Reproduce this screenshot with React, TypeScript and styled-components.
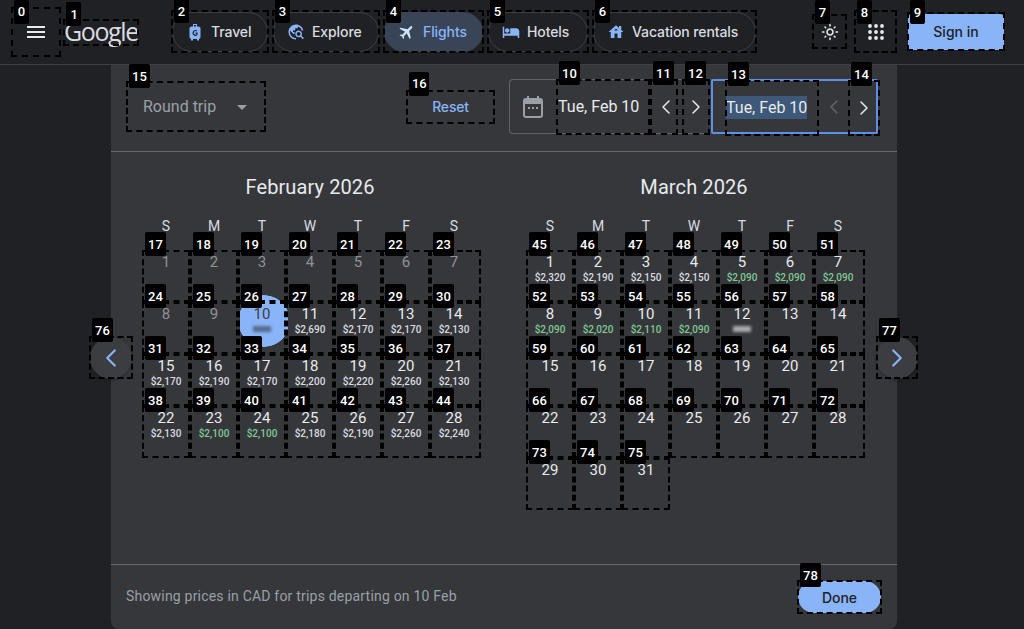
import { ChevronLeft, ChevronRight } from 'lucide-react'
import type { ReactNode } from 'react'
import { MdArrowDropDown, MdFlight, MdHotel, MdHouse, MdMenu, MdOutlineLightMode, MdTravelExplore } from 'react-icons/md'
import styled, { createGlobalStyle } from 'styled-components'

const Global = createGlobalStyle`
  html, body {
    margin: 0;
    height: 100%;
    background: #202124;
    overflow: hidden;
  }
  * { box-sizing: border-box; }
  body {
    font-family: Roboto, "Liberation Sans", sans-serif;
    color: #e8eaed;
  }
`

const Page = styled.div`
  width: 1024px;
  height: 629px;
  display: flex;
  flex-direction: column;
  overflow: hidden;
`

const Boxed = styled.div<{ $w?: number; $h?: number }>`
  position: relative;
  flex: none;
  display: flex;
  align-items: center;
  ${(p) => (p.$w ? `width: ${p.$w}px;` : '')}
  ${(p) => (p.$h ? `height: ${p.$h}px;` : '')}
  &::after {
    content: '';
    position: absolute;
    inset: 0;
    border: 2px dashed #000;
    pointer-events: none;
    z-index: 4;
  }
`

const Badge = styled.span<{ $top: number }>`
  position: absolute;
  left: 3px;
  top: ${(p) => p.$top}px;
  height: 24px;
  min-width: 15px;
  padding: 0 3px;
  display: flex;
  align-items: center;
  justify-content: center;
  background: #000;
  border-radius: 2px;
  color: #fff;
  font: 500 13px Roboto, sans-serif;
  z-index: 5;
`

const Tagged = ({ n, w, h, top = -18, children, className }: { n: number; w?: number; h?: number; top?: number; children?: ReactNode; className?: string }) => (
  <Boxed $w={w} $h={h} className={className}>
    {children}
    <Badge $top={top}>{n}</Badge>
  </Boxed>
)

const Header = styled.div`
  height: 65px;
  flex: none;
  display: flex;
  align-items: center;
  padding: 0 19px 1px 11px;
  background: #202124;
  border-bottom: 1px solid #3c4043;
`

const MenuBtn = styled(Tagged)`
  justify-content: center;
  color: #e8eaed;
  font-size: 24px;
`

const Logo = styled(Tagged)`
  margin: 2px 0 0 2px;
  padding: 0 0 3px 1px;
  font: 400 25px "Open Sans", sans-serif;
  letter-spacing: -1.4px;
  color: #dadce0;
`

const Nav = styled.div`
  display: flex;
  gap: 3px;
  margin-left: 32px;
`

const Chip = styled.div<{ $active?: boolean }>`
  flex: 1;
  height: 40px;
  margin: 0 1px;
  display: flex;
  align-items: center;
  gap: 7px;
  padding-left: 13px;
  border-radius: 20px;
  border: 1px solid ${(p) => (p.$active ? '#394457' : '#3c4043')};
  background: ${(p) => (p.$active ? '#394457' : 'transparent')};
  color: ${(p) => (p.$active ? '#8ab4f8' : '#dadce0')};
  font: 500 14px Inter, sans-serif;
  letter-spacing: -0.1px;
  svg {
    flex: none;
    font-size: 18px;
    color: #8ab4f8;
  }
`

const PlaneIcon = styled(MdFlight)`
  transform: rotate(45deg);
  && {
    color: #d2e3fc;
  }
`

const Right = styled.div`
  margin-left: auto;
  display: flex;
  align-items: center;
  gap: 7px;
`

const IconBox = styled(Tagged)`
  justify-content: center;
  color: #e8eaed;
  font-size: 18px;
`

const SignInBox = styled(Tagged)`
  margin-left: 3px;
`

const SignIn = styled.div`
  flex: 1;
  height: 36px;
  margin: 0 1px;
  display: flex;
  align-items: center;
  justify-content: center;
  background: #8ab4f8;
  border-radius: 4px;
  color: #202124;
  font: 500 14px Inter, sans-serif;
`

const Panel = styled.div`
  position: relative;
  flex: 1;
  width: 786px;
  margin-left: 111px;
  display: flex;
  flex-direction: column;
  background: #36373b;
  border-radius: 0 0 8px 8px;
`

const Toolbar = styled.div`
  height: 87px;
  flex: none;
  display: flex;
  align-items: center;
  padding: 0 0 3px 15px;
  border-bottom: 1px solid #66686c;
`

const TripSelect = styled(Tagged)`
  padding-left: 17px;
  color: #9aa0a6;
  font-size: 16px;
  svg {
    margin-left: 14px;
    font-size: 24px;
  }
`

const Reset = styled(Tagged)`
  margin-left: 140px;
  justify-content: center;
  color: #8ab4f8;
  font: 500 14px Inter, sans-serif;
  letter-spacing: -0.2px;
`

const DateField = styled.div`
  flex: none;
  height: 55px;
  display: flex;
  align-items: stretch;
  border: 1px solid #5f6368;
`

const StartField = styled(DateField)`
  width: 202px;
  margin-left: 14px;
  border-right: 0;
  border-radius: 4px 0 0 4px;
`

const EndField = styled(DateField)`
  width: 167px;
  border: 2px solid #5b8fe8;
  border-radius: 2px;
`

const CalIcon = styled.div`
  width: 46px;
  flex: none;
  display: flex;
  align-items: center;
  justify-content: center;
  color: #9aa0a6;
`

const DateText = styled(Tagged)`
  height: 56px;
  margin: -1px 0;
  padding: 0 0 2px 2px;
  font-size: 16px;
  color: #e8eaed;
`

const EndDateText = styled(DateText)`
  margin-left: 12px;
  padding-left: 1px;
`

const Picked = styled.span`
  background: #3d5878;
  padding: 2px 0;
`

const Stepper = styled(Tagged)`
  height: 56px;
  margin: -1px 0;
  justify-content: center;
  color: #e8eaed;
`

const PrevStepper = styled(Stepper)`
  padding-left: 3px;
`

const NextStepper = styled(Stepper)`
  margin-left: 4px;
`

const DimArrow = styled.div`
  width: 29px;
  flex: none;
  display: flex;
  align-items: center;
  justify-content: center;
  color: #62656a;
`

const Calendars = styled.div`
  flex: 1;
  display: flex;
  gap: 48px;
  padding: 23px 0 0 31px;
`

const Month = styled.div`
  width: 336px;
`

const MonthTitle = styled.div`
  height: 24px;
  line-height: 24px;
  text-align: center;
  font-size: 20px;
  letter-spacing: 0.1px;
  color: #e8eaed;
`

const Weekdays = styled.div`
  display: grid;
  grid-template-columns: repeat(7, 48px);
  margin: 19px 0 16px;
  height: 16px;
  line-height: 16px;
  text-align: center;
  font-size: 14px;
  color: #dadce0;
`

const Days = styled.div`
  display: grid;
  grid-template-columns: repeat(7, 48px);
  grid-auto-rows: 52px;
`

const DayBox = styled(Tagged)`
  &:nth-child(7n)::after {
    right: -3px;
  }
`

const DayInner = styled.div<{ $selected?: boolean; $past?: boolean }>`
  position: relative;
  width: 100%;
  height: 100%;
  padding-top: 3px;
  text-align: center;
  color: ${(p) => (p.$selected ? '#3c4043' : p.$past ? '#8f9296' : '#e8eaed')};
  ${(p) =>
    p.$selected
      ? `&::before {
    content: '';
    position: absolute;
    left: 2px;
    top: -7px;
    width: 48px;
    height: 52px;
    background: radial-gradient(circle 26px at center, #8ab4f8 98%, transparent 100%);
  }`
      : ''}
`

const DayNum = styled.div`
  position: relative;
  font-size: 15px;
  line-height: 18px;
`

const Price = styled.div<{ $low?: boolean }>`
  margin-top: 1px;
  font-size: 10px;
  font-weight: 500;
  line-height: 12px;
  color: ${(p) => (p.$low ? '#81c995' : '#dadce0')};
`

const BlurPrice = styled.div<{ $dark?: boolean }>`
  position: relative;
  width: 18px;
  height: 6px;
  margin: 3px auto 0;
  background: ${(p) => (p.$dark ? '#566b90' : '#a8aaae')};
  filter: blur(1.5px);
`

const SideNav = styled(Tagged)<{ $side: 'left' | 'right' }>`
  position: absolute;
  top: 271px;
  ${(p) => (p.$side === 'left' ? 'left: -22px;' : 'right: -21px;')}
  justify-content: center;
`

const RoundArrow = styled.div`
  width: 42px;
  height: 42px;
  border-radius: 50%;
  display: flex;
  align-items: center;
  justify-content: center;
  background: #3c3d41;
  box-shadow: 0 1px 3px rgba(0, 0, 0, 0.3);
  color: #8ab4f8;
`

const Footer = styled.div`
  height: 65px;
  flex: none;
  display: flex;
  align-items: center;
  justify-content: space-between;
  padding: 0 15px;
  border-top: 1px solid #66686c;
`

const Note = styled.div`
  margin-top: -2px;
  font-size: 14px;
  letter-spacing: 0.2px;
  color: #9aa0a6;
`

const DoneBtn = styled.div`
  flex: 1;
  height: 32px;
  margin: 0 1px;
  display: flex;
  align-items: center;
  justify-content: center;
  border-radius: 16px;
  background: #8ab4f8;
  color: #202124;
  font: 500 14px Inter, sans-serif;
`

type Day = { d: number; price?: string; low?: boolean; past?: boolean; selected?: boolean; blur?: boolean }

const feb: Day[] = [
  ...Array.from({ length: 9 }, (_, i) => ({ d: i + 1, past: true })),
  { d: 10, selected: true, blur: true },
  { d: 11, price: '$2,690' },
  { d: 12, price: '$2,170' },
  { d: 13, price: '$2,170' },
  { d: 14, price: '$2,130' },
  { d: 15, price: '$2,170' },
  { d: 16, price: '$2,190' },
  { d: 17, price: '$2,170' },
  { d: 18, price: '$2,200' },
  { d: 19, price: '$2,220' },
  { d: 20, price: '$2,260' },
  { d: 21, price: '$2,130' },
  { d: 22, price: '$2,130' },
  { d: 23, price: '$2,100', low: true },
  { d: 24, price: '$2,100', low: true },
  { d: 25, price: '$2,180' },
  { d: 26, price: '$2,190' },
  { d: 27, price: '$2,260' },
  { d: 28, price: '$2,240' },
]

const mar: Day[] = [
  { d: 1, price: '$2,320' },
  { d: 2, price: '$2,190' },
  { d: 3, price: '$2,150' },
  { d: 4, price: '$2,150' },
  { d: 5, price: '$2,090', low: true },
  { d: 6, price: '$2,090', low: true },
  { d: 7, price: '$2,090', low: true },
  { d: 8, price: '$2,090', low: true },
  { d: 9, price: '$2,020', low: true },
  { d: 10, price: '$2,110', low: true },
  { d: 11, price: '$2,090', low: true },
  { d: 12, blur: true },
  ...Array.from({ length: 19 }, (_, i) => ({ d: i + 13 })),
]

const CalMonth = ({ title, days, first }: { title: string; days: Day[]; first: number }) => (
  <Month>
    <MonthTitle>{title}</MonthTitle>
    <Weekdays>
      {['S', 'M', 'T', 'W', 'T', 'F', 'S'].map((w, i) => (
        <div key={i}>{w}</div>
      ))}
    </Weekdays>
    <Days>
      {days.map((day, i) => (
        <DayBox key={day.d} n={first + i}>
          <DayInner $selected={day.selected} $past={day.past}>
            <DayNum>{day.d}</DayNum>
            {day.price && <Price $low={day.low}>{day.price}</Price>}
            {day.blur && <BlurPrice $dark={day.selected} />}
          </DayInner>
        </DayBox>
      ))}
    </Days>
  </Month>
)

const AppsIcon = () => (
  <svg width="16" height="16" viewBox="0 0 16 16" fill="currentColor">
    {[2, 8, 14].flatMap((y) => [2, 8, 14].map((x) => <circle key={`${x}-${y}`} cx={x} cy={y} r="1.9" />))}
  </svg>
)

const SuitcaseIcon = () => (
  <svg width="18" height="18" viewBox="0 0 18 18" fill="currentColor">
    <path d="M7 1h4v3H10V2H8v2H7z" />
    <rect x="3.5" y="3.5" width="11" height="12.5" rx="2" />
    <rect x="5" y="16" width="2" height="1.5" />
    <rect x="11" y="16" width="2" height="1.5" />
    <path d="M11 8.2a2.3 2.3 0 1 0 0 3.4V10H9.2" fill="none" stroke="#202124" strokeWidth="1.1" />
  </svg>
)

const CalendarIcon = () => (
  <svg width="20" height="22" viewBox="0 0 20 22" fill="currentColor">
    <path d="M4 0h2v2h8V0h2v2h1a3 3 0 0 1 3 3v14a3 3 0 0 1-3 3H3a3 3 0 0 1-3-3V5a3 3 0 0 1 3-3h1zM2 8v11a1 1 0 0 0 1 1h14a1 1 0 0 0 1-1V8z" />
    <rect x="5" y="11" width="2" height="2" />
    <rect x="9" y="11" width="2" height="2" />
    <rect x="13" y="11" width="2" height="2" />
  </svg>
)

export default () => {
  return (
    <Page>
      <Global />
      <Header>
        <MenuBtn n={0} w={50} h={50} top={-7}>
          <MdMenu />
        </MenuBtn>
        <Logo n={1} w={76} h={27} top={-17}>
          Google
        </Logo>
        <Nav>
          <Tagged n={2} w={98} h={43} top={-11}>
            <Chip>
              <SuitcaseIcon />
              Travel
            </Chip>
          </Tagged>
          <Tagged n={3} w={108} h={43} top={-11}>
            <Chip>
              <MdTravelExplore />
              Explore
            </Chip>
          </Tagged>
          <Tagged n={4} w={101} h={43} top={-11}>
            <Chip $active>
              <PlaneIcon />
              Flights
            </Chip>
          </Tagged>
          <Tagged n={5} w={102} h={43} top={-11}>
            <Chip>
              <MdHotel />
              Hotels
            </Chip>
          </Tagged>
          <Tagged n={6} w={165} h={43} top={-11}>
            <Chip>
              <MdHouse />
              Vacation rentals
            </Chip>
          </Tagged>
        </Nav>
        <Right>
          <IconBox n={7} w={35} h={35} top={-14}>
            <MdOutlineLightMode />
          </IconBox>
          <IconBox n={8} w={43} h={43} top={-10}>
            <AppsIcon />
          </IconBox>
          <SignInBox n={9} w={98} h={39} top={-12}>
            <SignIn>Sign in</SignIn>
          </SignInBox>
        </Right>
      </Header>
      <Panel>
        <Toolbar>
          <TripSelect n={15} w={140} h={51} top={-17}>
            Round trip
            <MdArrowDropDown />
          </TripSelect>
          <Reset n={16} w={89} h={34}>
            Reset
          </Reset>
          <StartField>
            <CalIcon>
              <CalendarIcon />
            </CalIcon>
            <DateText n={10} w={94}>
              Tue, Feb 10
            </DateText>
            <PrevStepper n={11} w={28}>
              <ChevronLeft size={24} strokeWidth={1.5} />
            </PrevStepper>
            <NextStepper n={12} w={28}>
              <ChevronRight size={24} strokeWidth={1.5} />
            </NextStepper>
          </StartField>
          <EndField>
            <EndDateText n={13} w={94}>
              <Picked>Tue, Feb 10</Picked>
            </EndDateText>
            <DimArrow>
              <ChevronLeft size={24} strokeWidth={1.5} />
            </DimArrow>
            <Stepper n={14} w={32}>
              <ChevronRight size={24} strokeWidth={1.5} />
            </Stepper>
          </EndField>
        </Toolbar>
        <Calendars>
          <CalMonth title="February 2026" days={feb} first={17} />
          <CalMonth title="March 2026" days={mar} first={45} />
        </Calendars>
        <SideNav n={76} w={44} h={43} $side="left">
          <RoundArrow>
            <ChevronLeft size={30} strokeWidth={1.7} />
          </RoundArrow>
        </SideNav>
        <SideNav n={77} w={42} h={43} $side="right">
          <RoundArrow>
            <ChevronRight size={30} strokeWidth={1.7} />
          </RoundArrow>
        </SideNav>
        <Footer>
          <Note>Showing prices in CAD for trips departing on 10 Feb</Note>
          <Tagged n={78} w={85} h={34} top={-17}>
            <DoneBtn>Done</DoneBtn>
          </Tagged>
        </Footer>
      </Panel>
    </Page>
  )
}
